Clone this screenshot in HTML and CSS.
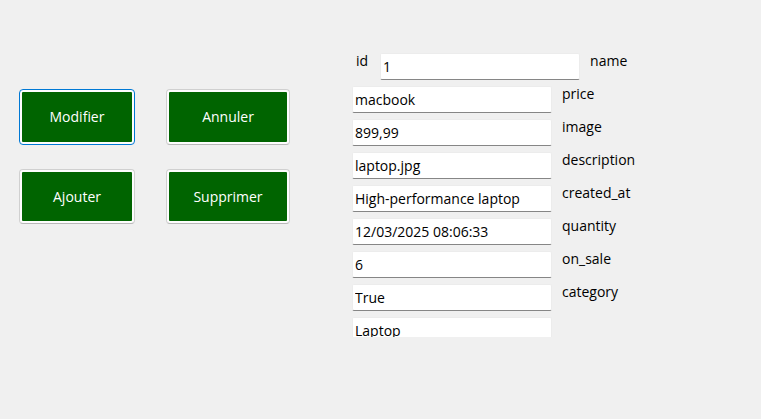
FILE: index.html
```html
<!DOCTYPE html>
<html lang="fr">
<head>
<meta charset="utf-8">
<title>Modifier</title>
<link rel="stylesheet" href="styles.css">
</head>
<body>
<main class="window">
  <div class="actions">
    <button class="action action-default" type="button">Modifier</button>
    <button class="action" type="button">Annuler</button>
    <button class="action" type="button">Ajouter</button>
    <button class="action" type="button">Supprimer</button>
  </div>
  <form class="fields">
    <div class="row"><label class="lead" for="id">id</label><input class="field" id="id" value="1"><label for="name">name</label></div>
    <div class="row"><input class="field" id="name" value="macbook"><label for="price">price</label></div>
    <div class="row"><input class="field" id="price" value="899,99"><label for="image">image</label></div>
    <div class="row"><input class="field" id="image" value="laptop.jpg"><label for="description">description</label></div>
    <div class="row"><input class="field" id="description" value="High-performance laptop"><label for="created_at">created_at</label></div>
    <div class="row"><input class="field" id="created_at" value="12/03/2025 08:06:33"><label for="quantity">quantity</label></div>
    <div class="row"><input class="field" id="quantity" value="6"><label for="on_sale">on_sale</label></div>
    <div class="row"><input class="field" id="on_sale" value="True"><label for="category">category</label></div>
    <div class="row"><input class="field" id="category" value="Laptop"></div>
  </form>
</main>
</body>
</html>
```
FILE: styles.css
```css
* {
  box-sizing: border-box;
}

body {
  margin: 0;
  background: #f0f0f0;
  color: #000;
  font: 14px/22px "Segoe UI", "Open Sans", "Noto Sans", sans-serif;
}

.window {
  display: flex;
  align-items: flex-start;
  gap: 62px;
  padding: 50px 19px;
}

.actions {
  display: grid;
  grid-template-columns: 116px 124px;
  grid-template-rows: 56px 55px;
  gap: 24px 31px;
  margin-top: 39px;
}

.action {
  padding: 2px;
  border: 1px solid #d0d0d0;
  border-bottom-color: #b8b8b8;
  border-radius: 4px;
  background: linear-gradient(#006400, #006400) content-box, #fdfdfd;
  color: #fff;
  font: inherit;
}

.action-default {
  border-color: #0078d4;
}

.fields {
  flex: 1;
  max-height: 287px;
  overflow: hidden;
}

.row {
  display: flex;
  align-items: flex-start;
  gap: 10px;
  padding-bottom: 3px;
}

.lead {
  padding: 0 2px 0 4px;
}

.field {
  width: 200px;
  height: 27px;
  margin-top: 3px;
  padding: 0 2px;
  border: 1px solid #ececec;
  border-bottom-color: #868686;
  border-radius: 2px;
  background: #fff;
  color: inherit;
  font: inherit;
}
```
